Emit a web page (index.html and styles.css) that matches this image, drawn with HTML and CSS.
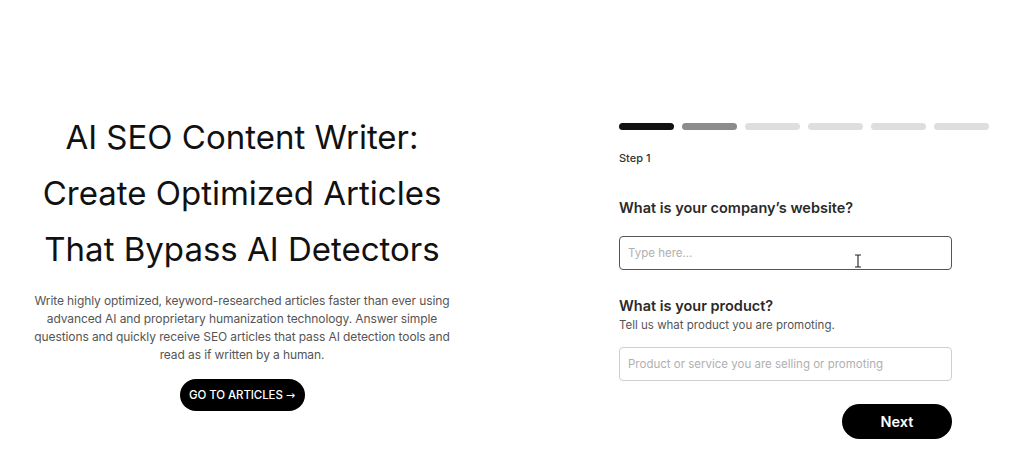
FILE: index.html
```html
<!DOCTYPE html>
<html>
<head>
<meta charset="utf-8">
<link rel="stylesheet" href="styles.css">
</head>
<body>
<main class="page">
  <section class="hero">
    <h1 class="title">AI SEO Content Writer:<br>Create Optimized Articles<br>That Bypass AI Detectors</h1>
    <p class="lead">Write highly optimized, keyword-researched articles faster than ever using advanced AI and proprietary humanization technology. Answer simple questions and quickly receive SEO articles that pass AI detection tools and read as if written by a human.</p>
    <a class="btn-articles" href="#">GO TO ARTICLES <span class="arrow">→</span></a>
  </section>
  <section class="form">
    <div class="progress">
      <span class="bar done"></span>
      <span class="bar current"></span>
      <span class="bar"></span>
      <span class="bar"></span>
      <span class="bar"></span>
      <span class="bar"></span>
    </div>
    <div class="step">Step 1</div>
    <h2 class="q q-first">What is your company’s website?</h2>
    <div class="field">
      <input class="input input-active" type="text" placeholder="Type here...">
      <svg class="cursor" width="8" height="14" viewBox="0 0 8 14"><path d="M1 1h2.2c.5 0 .8.4.8.8v10.4c0 .4.3.8.8.8H7M7 1H4.8c-.5 0-.8.4-.8.8M1 13h2.2c.5 0 .8-.4.8-.8" fill="none" stroke="#222" stroke-width="1.1"/></svg>
    </div>
    <h2 class="q q-second">What is your product?</h2>
    <p class="hint">Tell us what product you are promoting.</p>
    <input class="input" type="text" placeholder="Product or service you are selling or promoting">
    <div class="actions">
      <button class="btn-next" type="button">Next</button>
    </div>
  </section>
</main>
</body>
</html>
```
FILE: styles.css
```css
* { box-sizing: border-box; }
html, body { margin: 0; padding: 0; background: #fff; }
body {
  font-family: "Inter", "Liberation Sans", Arial, sans-serif;
  color: #111;
  width: 1024px;
  height: 468px;
  overflow: hidden;
}
.page {
  display: flex;
  gap: 135px;
}
.hero {
  width: 484px;
  padding-top: 109px;
  display: flex;
  flex-direction: column;
  align-items: center;
  text-align: center;
}
.title {
  margin: 0;
  font-size: 33px;
  line-height: 56px;
  font-weight: 400;
  letter-spacing: 0;
  color: #111;
}
.lead {
  margin: 15px 0 0;
  width: 440px;
  font-size: 12px;
  line-height: 18px;
  letter-spacing: -0.1px;
  color: #555;
}
.btn-articles {
  margin-top: 15px;
  display: inline-flex;
  align-items: center;
  justify-content: center;
  gap: 3px;
  width: 125px;
  height: 32px;
  border-radius: 16px;
  background: #000;
  color: #fff;
  font-size: 11.5px;
  font-weight: 500;
  text-decoration: none;
  letter-spacing: -0.1px;
}
.arrow {
  font-family: "DejaVu Sans", sans-serif;
  font-size: 11px;
}
.form {
  width: 370px;
  padding-top: 123px;
  display: flex;
  flex-direction: column;
}
.progress {
  display: flex;
  gap: 8px;
}
.bar {
  width: 55px;
  height: 7px;
  border-radius: 4px;
  background: #dedede;
}
.bar.done { background: #111; }
.bar.current { background: #8c8c8c; }
.step {
  margin-top: 21px;
  font-size: 11px;
  line-height: 14px;
  font-weight: 500;
  color: #333;
}
.q {
  margin: 0;
  font-size: 14.5px;
  line-height: 20px;
  font-weight: 600;
  color: #2a2a2a;
}
.q-first { margin-top: 33px; }
.q-second { margin-top: 26px; }
.hint {
  margin: 1px 0 0;
  font-size: 11.5px;
  line-height: 16px;
  color: #555;
}
.field {
  position: relative;
  margin-top: 18px;
  width: 333px;
}
.input {
  display: block;
  width: 333px;
  height: 34px;
  padding: 0 8px;
  border: 1px solid #cfcfcf;
  border-radius: 4px;
  font-family: inherit;
  font-size: 11.5px;
  color: #222;
  background: #fff;
  outline: none;
}
.input::placeholder { color: #b0b0b0; }
.input-active { border-color: #555; }
.hint + .input { margin-top: 14px; }
.cursor {
  position: absolute;
  left: 235px;
  top: 18px;
}
.actions {
  width: 333px;
  margin-top: 23px;
  display: flex;
  justify-content: flex-end;
}
.btn-next {
  width: 110px;
  height: 35px;
  border: none;
  border-radius: 18px;
  background: #000;
  color: #fff;
  font-family: inherit;
  font-size: 14.5px;
  font-weight: 600;
  cursor: pointer;
}
```
